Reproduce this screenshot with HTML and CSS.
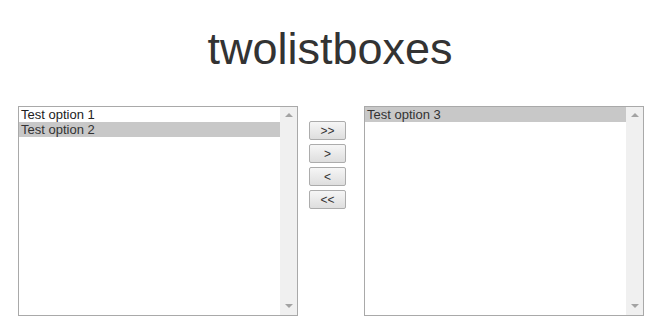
FILE: index.html
```html
<!DOCTYPE html>
<html lang="en">
<head>
  <meta charset="UTF-8">
  <title>twolistboxes</title>
  <meta name="viewport" content="width=device-width, initial-scale=1.0">
  <link rel="stylesheet" href="styles.css">
</head>
<body>
  <h1 class="title">twolistboxes</h1>

  <div class="dual-list">
    <!-- 왼쪽 목록 -->
    <div class="list-box">
      <div class="list-items">
        <div class="list-item">Test option 1</div>
        <div class="list-item selected">Test option 2</div>
      </div>
      <div class="list-scroll">
        <span class="arrow up"></span>
        <span class="arrow down"></span>
      </div>
    </div>

    <!-- 이동 버튼 -->
    <div class="move-btns">
      <button class="move-btn">&gt;&gt;</button>
      <button class="move-btn">&gt;</button>
      <button class="move-btn">&lt;</button>
      <button class="move-btn">&lt;&lt;</button>
    </div>

    <!-- 오른쪽 목록 -->
    <div class="list-box">
      <div class="list-items">
        <div class="list-item selected">Test option 3</div>
      </div>
      <div class="list-scroll">
        <span class="arrow up"></span>
        <span class="arrow down"></span>
      </div>
    </div>
  </div>
</body>
</html>
```
FILE: styles.css
```css
html, body {
  margin: 0; padding: 0;
  background: #fff;
  font-family: 'Liberation Sans', Arial, sans-serif;
  color: #333;
}
.title {
  margin: 24px 0 0 0;
  font-size: 45px;
  line-height: 50px;
  font-weight: 400;
  text-align: center;
  color: #333;
}
.dual-list {
  display: flex;
  align-items: flex-start;
  margin-top: 32px;
  padding-left: 18px;
}
.list-box {
  width: 280px;
  height: 210px;
  box-sizing: border-box;
  border: 1px solid #a9a9a9;
  display: flex;
  background: #fff;
}
.list-items {
  flex: 1;
}
.list-item {
  font-size: 13px;
  line-height: 15px;
  padding: 0 2px;
  color: #222;
  white-space: nowrap;
}
.list-item.selected {
  background: #c8c8c8;
  color: #333;
}
.list-scroll {
  width: 17px;
  background: #f0f0f0;
  display: flex;
  flex-direction: column;
  justify-content: space-between;
  align-items: center;
  padding: 6px 0 7px 0;
}
.arrow {
  width: 0; height: 0;
  border-left: 4px solid transparent;
  border-right: 4px solid transparent;
}
.arrow.up { border-bottom: 4px solid #a3a3a3; }
.arrow.down { border-top: 4px solid #a3a3a3; }
.move-btns {
  display: flex;
  flex-direction: column;
  gap: 4px;
  margin: 15px 18px 0 11px;
}
.move-btn {
  width: 37px;
  height: 19px;
  padding: 0;
  font-family: 'Liberation Sans', Arial, sans-serif;
  font-size: 12px;
  color: #333;
  background: linear-gradient(#f6f6f6, #dedede);
  border: 1px solid #acacac;
  border-radius: 2px;
  cursor: pointer;
}
.move-btn:hover {
  background: linear-gradient(#eaf6fd, #d9f0fc);
}
```
